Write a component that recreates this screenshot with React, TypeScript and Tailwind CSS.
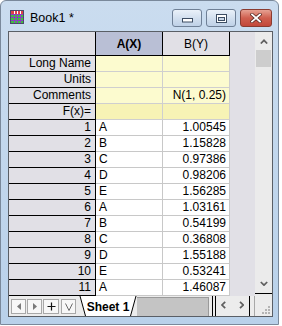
import React from 'react';

const labels = [
  { name: 'Long Name', a: '', b: '', bg: 'bg-[#fcfbcf]' },
  { name: 'Units', a: '', b: '', bg: 'bg-[#fcfbcf]' },
  { name: 'Comments', a: '', b: 'N(1, 0.25)', bg: 'bg-[#fcfbcf]' },
  { name: 'F(x)=', a: '', b: '', bg: 'bg-[#f7f3b5]' },
];

const rows = [
  ['A', '1.00545'],
  ['B', '1.15828'],
  ['C', '0.97386'],
  ['D', '0.98206'],
  ['E', '1.56285'],
  ['A', '1.03161'],
  ['B', '0.54199'],
  ['C', '0.36808'],
  ['D', '1.55188'],
  ['E', '0.53241'],
  ['A', '1.46087'],
];

function BookIcon() {
  return (
    <svg width="14" height="14" viewBox="0 0 14 14">
      <rect x="0.5" y="0.5" width="13" height="13" fill="#3fbf3f" stroke="#4a4a6a" />
      <rect x="1" y="1" width="12" height="3" fill="#e0404a" />
      <path d="M4.5 1v12M7.5 1v12M10.5 1v12" stroke="#ffffff" strokeWidth="1" />
      <path d="M1 4.5h12M1 7.5h12M1 10.5h12" stroke="#8a3fc0" strokeWidth="1" />
      <path d="M4.5 4v9M7.5 4v9M10.5 4v9" stroke="#8a3fc0" strokeWidth="1" />
    </svg>
  );
}

function CaptionButtons() {
  return (
    <div className="flex items-start gap-[4px] mt-[8px] mr-[6px]">
      <div className="w-[30px] h-[18px] rounded-[3px] border border-[#6f8096] bg-gradient-to-b from-[#eaf1f9] via-[#d3e0ef] to-[#bfd1e7] flex items-end justify-center pb-[3px]">
        <svg width="11" height="5" viewBox="0 0 11 5">
          <rect x="0.5" y="0.5" width="10" height="3.5" fill="#ffffff" stroke="#3c4d63" />
        </svg>
      </div>
      <div className="w-[30px] h-[18px] rounded-[3px] border border-[#6f8096] bg-gradient-to-b from-[#eaf1f9] via-[#d3e0ef] to-[#bfd1e7] flex items-center justify-center">
        <svg width="11" height="9" viewBox="0 0 11 9">
          <rect x="0.5" y="0.5" width="10" height="8" fill="#ffffff" stroke="#3c4d63" />
          <rect x="2.5" y="3.5" width="6" height="3" fill="#c9d7e8" stroke="#3c4d63" />
        </svg>
      </div>
      <div className="w-[32px] h-[18px] rounded-[3px] border border-[#8a3b30] bg-gradient-to-b from-[#e6a193] via-[#cf5f4f] to-[#c2473a] flex items-center justify-center">
        <svg width="12" height="10" viewBox="0 0 12 10">
          <path d="M2 1.5l8 7M10 1.5l-8 7" stroke="#5a2a24" strokeWidth="3.4" strokeLinecap="square" />
          <path d="M2 1.5l8 7M10 1.5l-8 7" stroke="#ffffff" strokeWidth="1.8" strokeLinecap="square" />
        </svg>
      </div>
    </div>
  );
}

function Chevron({ dir }: { dir: 'up' | 'down' | 'left' | 'right' }) {
  const pts = {
    up: '0.8,4.5 4,1.3 7.2,4.5',
    down: '0.8,1 4,4.2 7.2,1',
    left: '4.2,0.8 1,4 4.2,7.2',
    right: '1,0.8 4.2,4 1,7.2',
  }[dir];
  const horiz = dir === 'left' || dir === 'right';
  return (
    <svg width={horiz ? 5 : 8} height={horiz ? 8 : 5} viewBox={horiz ? '0 0 5 8' : '0 0 8 5'}>
      <polyline points={pts} fill="none" stroke="#5f5f5f" strokeWidth="1.7" />
    </svg>
  );
}

function SheetButton({ children, w }: { children: React.ReactNode; w: string }) {
  return (
    <div className={`${w} h-[15px] border border-[#a8a8a8] bg-[#f7f7f7] flex items-center justify-center`}>
      {children}
    </div>
  );
}

export default function App() {
  return (
    <div className="w-[282px] h-[326px] bg-white font-['Liberation_Sans',Arial,sans-serif] text-[12px] text-black">
      <div className="w-[279px] h-[325px] rounded-t-[6px] border border-[#7a899b] bg-gradient-to-b from-[#cadcef] to-[#b9d1ea] flex flex-col">
        {/* Title bar */}
        <div className="h-[30px] flex items-start">
          <div className="ml-[9px] mt-[9px]">
            <BookIcon />
          </div>
          <span className="ml-[6px] mt-[10px] leading-[15px] text-[12.5px]">Book1 *</span>
          <div className="flex-1" />
          <CaptionButtons />
        </div>

        {/* Worksheet */}
        <div className="ml-[7px] w-[265px] h-[286px] border border-[#5a5f66] bg-[#e1e0e6] flex flex-col">
          <div className="flex h-[264px]">
            <div className="w-[221px] flex flex-col">
              <div className="flex h-[24px]">
                <div className="w-[87px] border-r border-b border-black bg-[#e1e0e6]" />
                <div className="w-[67px] border-r border-b border-black bg-[#b9bfd5] flex items-center justify-center font-bold">
                  A(X)
                </div>
                <div className="w-[67px] border-r border-b border-black bg-[#e1e0e6] flex items-center justify-center">
                  B(Y)
                </div>
              </div>
              {labels.map((l) => (
                <div key={l.name} className="flex h-[16px] leading-[15px]">
                  <div className="w-[87px] border-r border-b border-black bg-[#e1e0e6] text-right pr-[4px]">{l.name}</div>
                  <div className={`w-[67px] border-r border-b border-[#cfcfcf] ${l.bg} pl-[3px]`}>{l.a}</div>
                  <div className={`w-[67px] border-r border-b border-[#cfcfcf] ${l.bg} text-right pr-[3px]`}>{l.b}</div>
                </div>
              ))}
              {rows.map((r, i) => (
                <div key={i} className="flex h-[16px] leading-[15px]">
                  <div className="w-[87px] border-r border-b border-black bg-[#e1e0e6] text-right pr-[4px]">{i + 1}</div>
                  <div className="w-[67px] border-r border-b border-[#c8c8c8] bg-white pl-[3px]">{r[0]}</div>
                  <div className="w-[67px] border-r border-b border-[#c8c8c8] bg-white text-right pr-[3px]">{r[1]}</div>
                </div>
              ))}
            </div>
            <div className="w-[25px]" />
            {/* Vertical scrollbar */}
            <div className="w-[17px] flex flex-col bg-[#ebebeb]">
              <div className="h-[17px] flex items-center justify-center pt-[1px]">
                <Chevron dir="up" />
              </div>
              <div className="h-[17px] mt-[1px] mx-[1px] bg-[#cdcdcd]" />
              <div className="flex-1" />
              <div className="h-[17px] flex items-center justify-center">
                <Chevron dir="down" />
              </div>
              <div className="h-[1px] bg-black mt-[1px]" />
              <div className="h-[2px]" />
            </div>
          </div>

          {/* Sheet tab bar */}
          <div className="flex h-[20px] bg-[#ececec]">
            <div className="w-[128px] flex items-start">
              <div className="flex items-start pl-[2px] mt-[3px]">
                <SheetButton w="w-[15px]">
                  <svg width="4" height="7" viewBox="0 0 4 7">
                    <polygon points="4,0 0,3.5 4,7" fill="#7a7a7a" />
                  </svg>
                </SheetButton>
                <div className="w-[1px]" />
                <SheetButton w="w-[15px]">
                  <svg width="4" height="7" viewBox="0 0 4 7">
                    <polygon points="0,0 4,3.5 0,7" fill="#7a7a7a" />
                  </svg>
                </SheetButton>
                <div className="w-[1px]" />
                <SheetButton w="w-[16px]">
                  <svg width="9" height="9" viewBox="0 0 9 9">
                    <path d="M4.5 0.5v8M0.5 4.5h8" stroke="#111" strokeWidth="1.2" />
                  </svg>
                </SheetButton>
                <div className="w-[2px]" />
                <SheetButton w="w-[15px]">
                  <svg width="8" height="8" viewBox="0 0 8 8">
                    <polyline points="0.5,0.5 4,7.5 7.5,0.5" fill="none" stroke="#6a6a6a" strokeWidth="1" />
                  </svg>
                </SheetButton>
              </div>
              <div className="ml-[3px] flex h-[20px]">
                <svg width="7" height="20" viewBox="0 0 7 20">
                  <polygon points="1,0 7,0 7,20 6.5,20" fill="#ffffff" />
                  <line x1="1" y1="0" x2="6.5" y2="20" stroke="#000" strokeWidth="1" />
                </svg>
                <span className="w-[44px] bg-white font-bold leading-[15px] pt-[4px] text-center whitespace-nowrap">Sheet 1</span>
                <svg width="7" height="20" viewBox="0 0 7 20">
                  <polygon points="0,0 6,0 0.5,20 0,20" fill="#ffffff" />
                  <line x1="6" y1="0" x2="0.5" y2="20" stroke="#000" strokeWidth="1" />
                </svg>
              </div>
            </div>
            <div className="w-[72px] mt-[1px] border-t border-r border-[#9a9a9a] bg-[#c4c4c4]" />
            <div className="w-[3px]" />
            <div className="w-[1px] bg-black" />
            <div className="w-[2px]" />
            <div className="w-[1px] bg-black" />
            <div className="w-[33px] flex items-center justify-between px-[5px] pb-[2px]">
              <Chevron dir="left" />
              <Chevron dir="right" />
            </div>
            <div className="w-[1px] bg-black" />
            <div className="w-[4px]" />
            <div className="w-[1px] bg-[#a8a8a8]" />
            <div className="w-[17px] flex items-end justify-end pr-[2px] pb-[2px]">
              <svg width="8" height="8" viewBox="0 0 8 8">
                <rect x="6" y="0" width="2" height="2" fill="#b4b4b4" />
                <rect x="3" y="3" width="2" height="2" fill="#b4b4b4" />
                <rect x="6" y="3" width="2" height="2" fill="#b4b4b4" />
                <rect x="0" y="6" width="2" height="2" fill="#b4b4b4" />
                <rect x="3" y="6" width="2" height="2" fill="#b4b4b4" />
                <rect x="6" y="6" width="2" height="2" fill="#b4b4b4" />
              </svg>
            </div>
          </div>
        </div>
      </div>
    </div>
  );
}
